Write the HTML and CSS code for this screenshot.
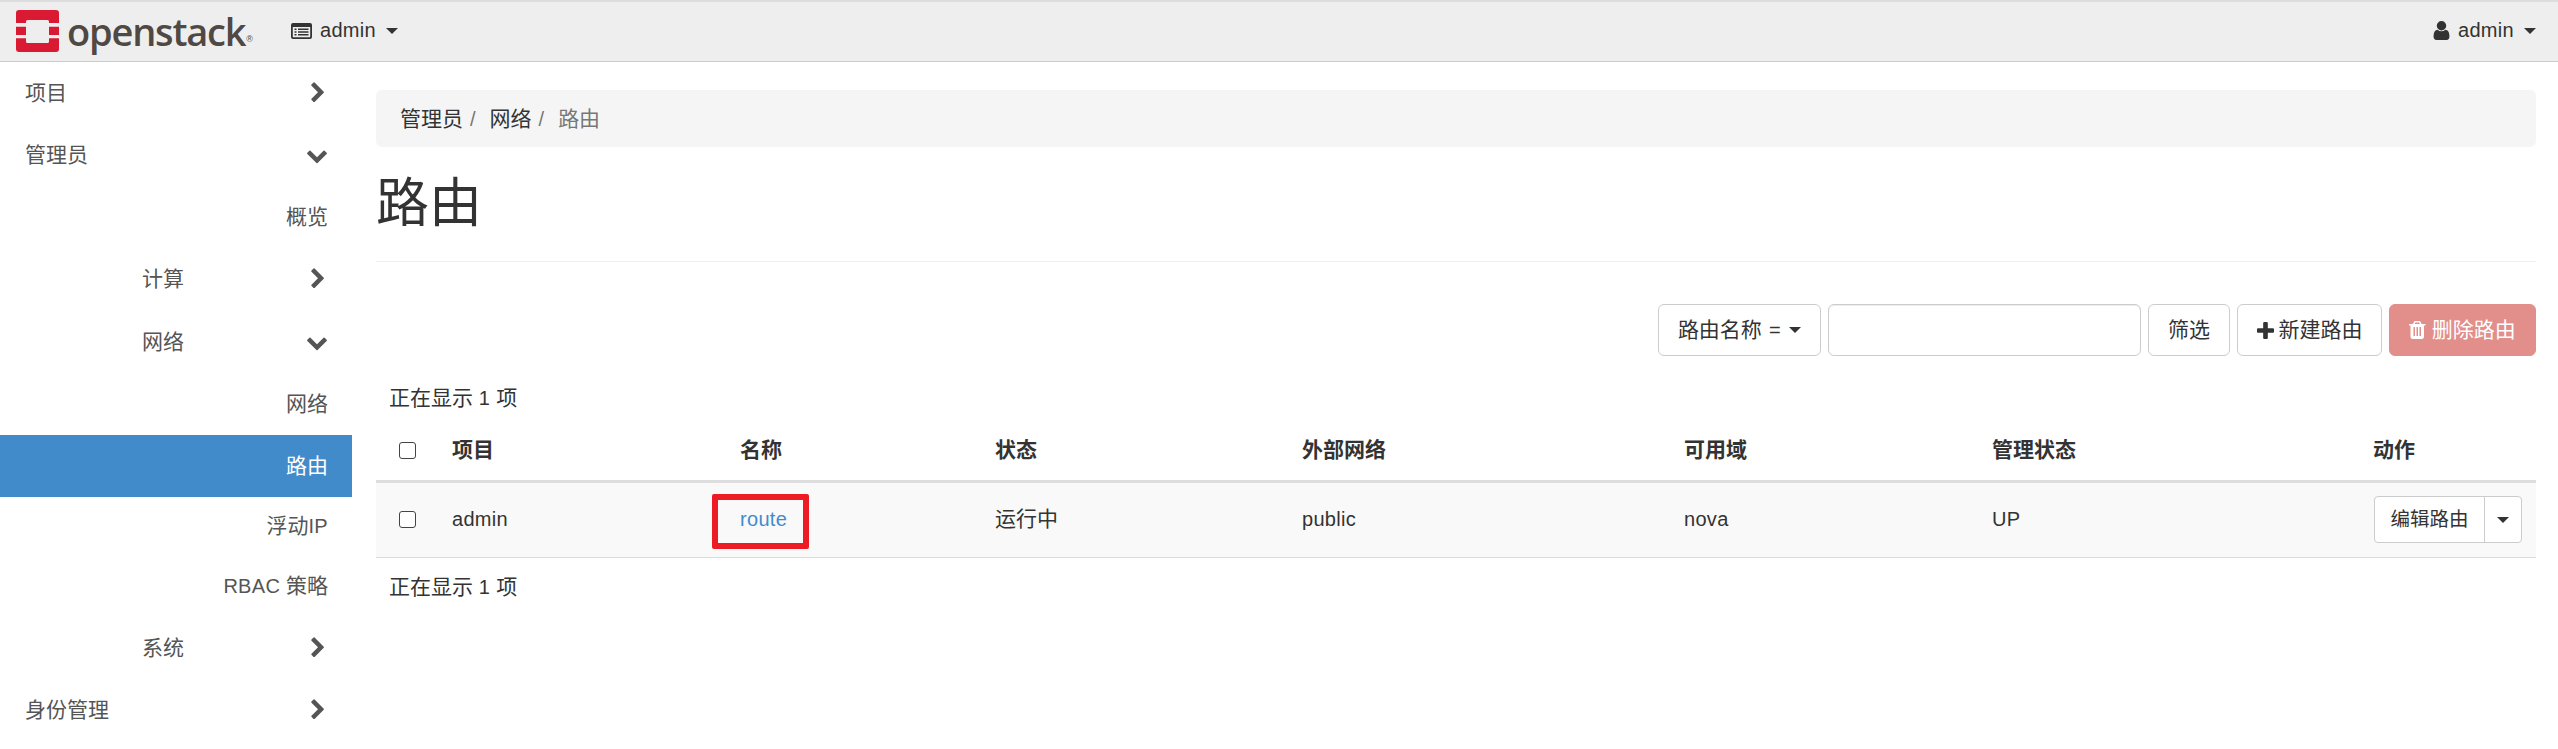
FILE: index.html
```html
<!DOCTYPE html>
<html lang="zh-CN">
<head>
<meta charset="utf-8">
<title>路由</title>
<link rel="stylesheet" href="styles.css">
</head>
<body>
<header class="topbar">
  <div class="brand">
    <svg class="logo-mark" viewBox="0 0 43 42"><path fill="#da1a32" d="M3 0h37a3 3 0 0 1 3 3v10H33v-1.500a1.500 1.500 0 0 0-1.500-1.500h-20a1.500 1.500 0 0 0-1.500 1.500V13H0V3a3 3 0 0 1 3-3zM0 16.700h10V25H0zM33 16.700h10V25H33zM0 28.300h10v3.200a1.500 1.500 0 0 0 1.500 1.500h20a1.500 1.500 0 0 0 1.500-1.500v-3.200h10V39a3 3 0 0 1-3 3H3a3 3 0 0 1-3-3z"/></svg>
    <span class="logo-text">openstack</span><span class="logo-reg">®</span>
  </div>
  <div class="project-menu">
    <svg class="icon-list" viewBox="0 0 21 16"><path fill="#333" fill-rule="evenodd" d="M2 0h17a2 2 0 0 1 2 2v12a2 2 0 0 1-2 2H2a2 2 0 0 1-2-2V2a2 2 0 0 1 2-2zM1.800 4v9.700c0 .3.200.5.500.5h16.400c.3 0 .5-.2.500-.5V4zM3.500 5.500h2v1.500h-2zM7 5.500h10.500v1.500H7zM3.500 8.300h2v1.500h-2zM7 8.300h10.500v1.500H7zM3.500 11h2v1.500h-2zM7 11h10.500v1.500H7z"/></svg>
    <span class="lat nav-name">admin</span><i class="caret"></i>
  </div>
  <div class="user-menu">
    <svg class="icon-user" viewBox="256 128 1280 1536"><path fill="#333" d="M1536 1399q0 109-62.500 187t-150.500 78h-854q-88 0-150.500-78t-62.500-187q0-85 8.500-160.500t31.500-152 58.500-131 94-89 134.500-34.500q131 128 313 128t313-128q76 0 134.500 34.500t94 89 58.500 131 31.500 152 8.500 160.500zm-256-887q0 159-112.500 271.500t-271.500 112.500-271.500-112.500-112.500-271.500 112.500-271.500 271.500-112.500 271.500 112.500 112.500 271.500z"/></svg>
    <span class="lat nav-name">admin</span><i class="caret"></i>
  </div>
</header>
<div class="layout">
  <nav class="sidebar">
    <a class="side-row lvl1"><span>项目</span><svg class="chev-r" viewBox="0 0 1792 1792"><path d="M1363 877l-742 742q-19 19-45 19t-45-19l-166-166q-19-19-19-45t19-45l531-531-531-531q-19-19-19-45t19-45l166-166q19-19 45-19t45 19l742 742q19 19 19 45t-19 45z"/></svg></a>
    <a class="side-row lvl1"><span>管理员</span><svg class="chev-d" viewBox="0 0 1792 1792"><path d="M1683 808l-742 741q-19 19-45 19t-45-19l-742-741q-19-19-19-45.500t19-45.500l166-165q19-19 45-19t45 19l531 531 531-531q19-19 45-19t45 19l166 165q19 19 19 45.500t-19 45.500z"/></svg></a>
    <a class="side-row lvl3"><span>概览</span></a>
    <a class="side-row lvl2"><span>计算</span><svg class="chev-r" viewBox="0 0 1792 1792"><path d="M1363 877l-742 742q-19 19-45 19t-45-19l-166-166q-19-19-19-45t19-45l531-531-531-531q-19-19-19-45t19-45l166-166q19-19 45-19t45 19l742 742q19 19 19 45t-19 45z"/></svg></a>
    <a class="side-row lvl2 row-open"><span>网络</span><svg class="chev-d" viewBox="0 0 1792 1792"><path d="M1683 808l-742 741q-19 19-45 19t-45-19l-742-741q-19-19-19-45.500t19-45.500l166-165q19-19 45-19t45 19l531 531 531-531q19-19 45-19t45 19l166 165q19 19 19 45.500t-19 45.500z"/></svg></a>
    <a class="side-row lvl3 row-before"><span>网络</span></a>
    <a class="side-row lvl3 active"><span>路由</span></a>
    <a class="side-row lvl3 row-after"><span>浮动<span class="lat">IP</span></span></a>
    <a class="side-row lvl3"><span><span class="lat">RBAC </span>策略</span></a>
    <a class="side-row lvl2"><span>系统</span><svg class="chev-r" viewBox="0 0 1792 1792"><path d="M1363 877l-742 742q-19 19-45 19t-45-19l-166-166q-19-19-19-45t19-45l531-531-531-531q-19-19-19-45t19-45l166-166q19-19 45-19t45 19l742 742q19 19 19 45t-19 45z"/></svg></a>
    <a class="side-row lvl1"><span>身份管理</span><svg class="chev-r" viewBox="0 0 1792 1792"><path d="M1363 877l-742 742q-19 19-45 19t-45-19l-166-166q-19-19-19-45t19-45l531-531-531-531q-19-19-19-45t19-45l166-166q19-19 45-19t45 19l742 742q19 19 19 45t-19 45z"/></svg></a>
  </nav>
  <main class="content">
    <ol class="breadcrumb">
      <li>管理员</li><li class="sep">/</li><li>网络</li><li class="sep">/</li><li class="current">路由</li>
    </ol>
    <h1 class="page-title">路由</h1>
    <div class="actions">
      <button class="btn btn-select"><span>路由名称<span class="lat eq"> =</span></span><i class="caret"></i></button>
      <input class="filter-input" type="text">
      <button class="btn btn-filter">筛选</button>
      <button class="btn btn-create"><svg class="icon-plus" viewBox="192 128 1408 1408"><path fill="#333" d="M1600 736v192q0 40-28 68t-68 28h-416v416q0 40-28 68t-68 28h-192q-40 0-68-28t-28-68v-416h-416q-40 0-68-28t-28-68v-192q0-40 28-68t68-28h416v-416q0-40 28-68t68-28h192q40 0 68 28t28 68v416h416q40 0 68 28t28 68z"/></svg>新建路由</button>
      <button class="btn btn-delete"><svg class="icon-trash" viewBox="192 128 1408 1536"><path fill="#fff" d="M704 1376v-704q0-14-9-23t-23-9h-64q-14 0-23 9t-9 23v704q0 14 9 23t23 9h64q14 0 23-9t9-23zm256 0v-704q0-14-9-23t-23-9h-64q-14 0-23 9t-9 23v704q0 14 9 23t23 9h64q14 0 23-9t9-23zm256 0v-704q0-14-9-23t-23-9h-64q-14 0-23 9t-9 23v704q0 14 9 23t23 9h64q14 0 23-9t9-23zm-544-992h448l-48-117q-7-9-17-11h-317q-10 2-17 11zm928 32v64q0 14-9 23t-23 9h-96v948q0 83-47 143.500t-113 60.500h-832q-66 0-113-58.500t-47-141.500v-952h-96q-14 0-23-9t-9-23v-64q0-14 9-23t23-9h309l70-167q15-37 54-63t79-26h320q40 0 79 26t54 63l70 167h309q14 0 23 9t9 23z"/></svg>删除路由</button>
    </div>
    <div class="count count-top">正在显示<span class="lat"> 1 </span>项</div>
    <table class="grid">
      <thead>
        <tr>
          <th class="c-check"><span class="checkbox"></span></th>
          <th class="c-project">项目</th>
          <th class="c-name">名称</th>
          <th class="c-status">状态</th>
          <th class="c-net">外部网络</th>
          <th class="c-zone">可用域</th>
          <th class="c-admin">管理状态</th>
          <th class="c-act">动作</th>
        </tr>
      </thead>
      <tbody>
        <tr>
          <td class="c-check"><span class="checkbox"></span></td>
          <td class="lat">admin</td>
          <td class="name-cell lat"><a class="link">route</a><span class="highlight"></span></td>
          <td>运行中</td>
          <td class="lat">public</td>
          <td class="lat">nova</td>
          <td class="lat">UP</td>
          <td class="act-cell"><div class="split"><span class="split-main">编辑路由</span><span class="split-toggle"><i class="caret"></i></span></div></td>
        </tr>
      </tbody>
    </table>
    <div class="count count-bottom">正在显示<span class="lat"> 1 </span>项</div>
  </main>
</div>
</body>
</html>
```
FILE: styles.css
```css
* { box-sizing: border-box; }
html, body { margin: 0; padding: 0; }
body {
  font-family: "Liberation Sans", "Noto Sans CJK SC", sans-serif;
  font-size: 21px;
  line-height: 28.5px;
  color: #333;
  background: #fff;
  overflow: hidden;
}
.lat { font-size: 20px; letter-spacing: .3px; }
.eq { letter-spacing: 1.500px; }
.caret {
  display: inline-block;
  width: 0;
  height: 0;
  border-top: 6px solid #333;
  border-left: 6px solid transparent;
  border-right: 6px solid transparent;
  vertical-align: middle;
}
.topbar {
  display: flex;
  align-items: center;
  height: 62px;
  padding-bottom: 2px;
  background: #eee;
  border-top: 2px solid #ddd;
  border-bottom: 1px solid #ccc;
}
.brand { display: flex; align-items: center; margin-left: 16px; width: 275px; }
.logo-mark { width: 43px; height: 42px; flex: none; }
.logo-text {
  font-family: "Open Sans", sans-serif;
  font-size: 38px;
  font-weight: 600;
  line-height: 42px;
  color: #4f4843;
  margin-left: 8px;
  letter-spacing: -1.200px;
}
.logo-reg { font-size: 9px; line-height: 8px; color: #4f4843; align-self: flex-end; margin-bottom: 9px; margin-left: 1px; }
.project-menu { display: flex; align-items: center; color: #333; }
.icon-list { width: 21px; height: 16px; margin-right: 8px; }
.project-menu .caret { margin-left: 10px; }
.user-menu { display: flex; align-items: center; margin-left: auto; margin-right: 22px; }
.icon-user { width: 17px; height: 19px; margin-right: 8px; }
.user-menu .caret { margin-left: 10px; }
.layout { display: flex; }
.sidebar { width: 352px; flex: none; }
.side-row {
  display: flex;
  align-items: center;
  height: 62px;
  color: #555;
}
.row-open { height: 64px; }
.row-before { height: 61px; }
.row-after { height: 58px; }
.side-row svg { fill: #555; flex: none; }
.chev-r { width: 22px; height: 22px; margin-left: auto; margin-right: 23px; }
.chev-d { width: 22px; height: 22px; margin-left: auto; margin-right: 24px; }
.lvl1 { padding-left: 25px; }
.lvl2 { padding-left: 142px; }
.lvl3 { justify-content: flex-end; padding-right: 24px; }
.active { background: #428bca; color: #fff; }
.content { width: 2160px; margin-left: 24px; padding-top: 28px; }
.breadcrumb {
  display: flex;
  list-style: none;
  margin: 0;
  height: 57px;
  align-items: center;
  padding: 1px 24px 0;
  background: #f5f5f5;
  border-radius: 6px;
}
.sep { color: #777; font-size: 20px; padding: 0 7px; margin-right: 7px; }
.current { color: #777; }
.page-title {
  margin: 0;
  padding: 29px 0 0;
  height: 115px;
  font-size: 53px;
  line-height: 56px;
  font-weight: 400;
  border-bottom: 1px solid #eee;
}
.actions {
  display: flex;
  justify-content: flex-end;
  gap: 7px;
  margin-top: 42px;
  height: 52px;
}
.btn {
  font: inherit;
  color: #333;
  background: #fff;
  border: 1px solid #ccc;
  border-radius: 6px;
  padding: 0;
  display: flex;
  align-items: center;
  justify-content: center;
}
.btn-select .caret { margin-left: 7px; }
.btn-select { width: 163px; }
.filter-input {
  width: 313px;
  border: 1px solid #ccc;
  border-radius: 6px;
  box-shadow: inset 0 1px 1px rgba(0,0,0,.075);
  background: #fff;
}
.btn-filter { width: 82px; }
.btn-create { width: 145px; }
.icon-plus { width: 17px; height: 17px; margin-right: 5px; }
.btn-delete { width: 147px; background: #e28e8b; border-color: #e28e8b; color: #fff; }
.icon-trash { width: 16.500px; height: 18px; margin-right: 6px; }
.count { padding-left: 13px; }
.count-top { margin-top: 28px; height: 29px; }
.count-bottom { margin-top: 15px; }
.grid { width: 2160px; border-collapse: collapse; table-layout: fixed; margin-top: 8px; }
.grid th {
  height: 60px;
  text-align: left;
  font-weight: 700;
  padding: 0 12px;
  border-bottom: 3px solid #ddd;
}
.grid td {
  height: 76px;
  padding: 0 12px;
  background: #f9f9f9;
  border-bottom: 1px solid #ddd;
}
.c-check { width: 64px; }
.c-project { width: 288px; }
.c-name { width: 255px; }
.c-status { width: 307px; }
.c-net { width: 382px; }
.c-zone { width: 308px; }
.c-admin { width: 381px; }
.checkbox {
  display: block;
  width: 17px;
  height: 17px;
  margin-left: 11px;
  border: 1.500px solid #444;
  border-radius: 3px;
  background: #fff;
}
.name-cell { position: relative; }
.link { color: #428bca; }
.highlight {
  position: absolute;
  left: -16px;
  top: 11px;
  width: 97px;
  height: 55px;
  border: 6px solid #ed1c24;
  border-radius: 2px;
}
.act-cell { padding: 0 12px 0 13px !important; }
.split {
  display: flex;
  width: 148px;
  height: 47px;
  background: #fff;
  border: 1px solid #ccc;
  border-radius: 4px;
  font-size: 19.500px;
}
.split-main { width: 109px; display: flex; align-items: center; justify-content: center; }
.split-toggle { flex: 1; display: flex; align-items: center; justify-content: center; border-left: 1px solid #ccc; }
```
